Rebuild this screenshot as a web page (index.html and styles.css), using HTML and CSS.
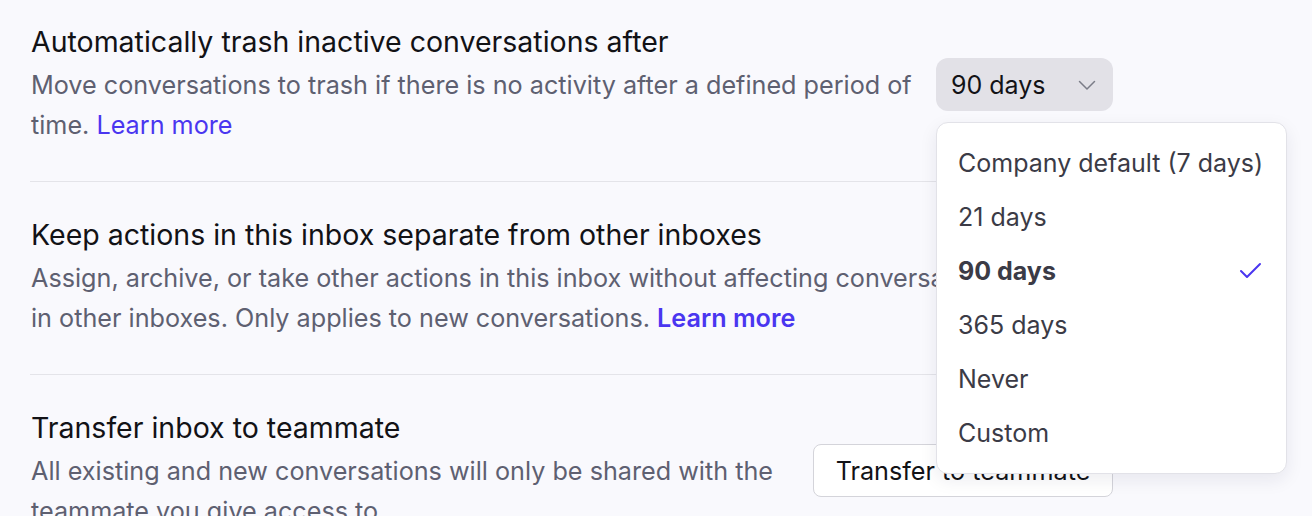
FILE: index.html
```html
<!DOCTYPE html>
<html lang="en">
<head>
    <meta charset="UTF-8">
    <meta name="viewport" content="width=device-width, initial-scale=1.0">
    <title>Inbox settings</title>
    <link rel="stylesheet" href="styles.css">
</head>
<body>
    <div class="settings">
        <div class="setting-row">
            <div class="setting-text">
                <div class="setting-title">Automatically trash inactive conversations after</div>
                <div class="setting-desc">Move conversations to trash if there is no activity after a defined period of time. <a href="#" class="link">Learn more</a></div>
            </div>
            <div class="setting-control">
                <div class="select-wrap">
                    <button type="button" class="select">
                        <span>90 days</span>
                        <svg class="chevron" width="20" height="20" viewBox="0 0 20 20"><path d="M2.5 6.5l7.5 7.5 7.5-7.5" fill="none" stroke="currentColor" stroke-width="1.5" stroke-linecap="round" stroke-linejoin="round"/></svg>
                    </button>
                    <ul class="menu">
                        <li class="menu-item">Company default (7 days)</li>
                        <li class="menu-item">21 days</li>
                        <li class="menu-item selected">90 days
                            <svg class="check" width="26" height="26" viewBox="0 0 26 26"><path d="M3 13l6 6L22 6" fill="none" stroke="currentColor" stroke-width="2" stroke-linecap="round" stroke-linejoin="round"/></svg>
                        </li>
                        <li class="menu-item">365 days</li>
                        <li class="menu-item">Never</li>
                        <li class="menu-item">Custom</li>
                    </ul>
                </div>
            </div>
        </div>

        <div class="setting-row">
            <div class="setting-text">
                <div class="setting-title">Keep actions in this inbox separate from other inboxes</div>
                <div class="setting-desc">Assign, archive, or take other actions in this inbox without affecting conversations in other inboxes. Only applies to new conversations. <a href="#" class="link bold">Learn more</a></div>
            </div>
            <div class="setting-control">
                <span class="toggle"></span>
            </div>
        </div>

        <div class="setting-row">
            <div class="setting-text">
                <div class="setting-title">Transfer inbox to teammate</div>
                <div class="setting-desc">All existing and new conversations will only be shared with the teammate you give access to.</div>
            </div>
            <div class="setting-control">
                <button type="button" class="btn">Transfer to teammate</button>
            </div>
        </div>
    </div>
</body>
</html>
```

FILE: styles.css
```css
html, body {
    margin: 0;
    padding: 0;
    background-color: #f9f9fd;
    font-family: Inter, "Noto Sans", sans-serif;
    overflow: hidden;
}
.settings {
    width: 1083px;
    padding: 24px 0 0 30px;
}
.setting-row {
    display: flex;
    align-items: center;
    gap: 18px;
    padding: 0 0 36px 1px;
    border-bottom: 1px solid #e4e4e9;
    margin-bottom: 35px;
}
.setting-row:last-child {
    border-bottom: none;
}
.setting-text {
    flex: 1;
    min-width: 0;
}
.setting-title {
    font-size: 28.5px;
    line-height: 36px;
    color: #121216;
    margin-bottom: 5px;
}
.setting-desc {
    font-size: 25.2px;
    line-height: 40px;
    color: #5e6071;
}
.link {
    color: #4a36f0;
    text-decoration: none;
}
.link.bold {
    font-weight: 600;
}
.setting-control {
    flex: none;
}
.select-wrap {
    position: relative;
}
.select {
    display: flex;
    align-items: center;
    justify-content: space-between;
    width: 177px;
    height: 53px;
    padding: 0 16px 0 15px;
    border: none;
    border-radius: 12px;
    background-color: #e2e1e7;
    font-family: inherit;
    font-size: 25px;
    color: #121216;
}
.chevron {
    color: #7b7d88;
}
.menu {
    position: absolute;
    top: 64px;
    left: 0;
    z-index: 2;
    width: 351px;
    box-sizing: border-box;
    margin: 0;
    padding: 13px 0;
    list-style: none;
    background-color: #ffffff;
    border: 1px solid #e2e2e8;
    border-radius: 12px;
    box-shadow: 0 6px 18px rgba(30, 30, 60, 0.08);
}
.menu-item {
    display: flex;
    align-items: center;
    justify-content: space-between;
    height: 54px;
    padding: 0 22px 0 21px;
    font-size: 25px;
    color: #3b3b46;
}
.menu-item.selected {
    font-weight: 700;
}
.check {
    color: #4a36f0;
}
.toggle {
    display: block;
    width: 84px;
    height: 30px;
    border-radius: 15px;
    background-color: #d8d8df;
}
.btn {
    width: 300px;
    height: 53px;
    border: 1px solid #d4d4da;
    border-radius: 8px;
    background-color: #ffffff;
    font-family: inherit;
    font-size: 25.2px;
    color: #121216;
}
```
